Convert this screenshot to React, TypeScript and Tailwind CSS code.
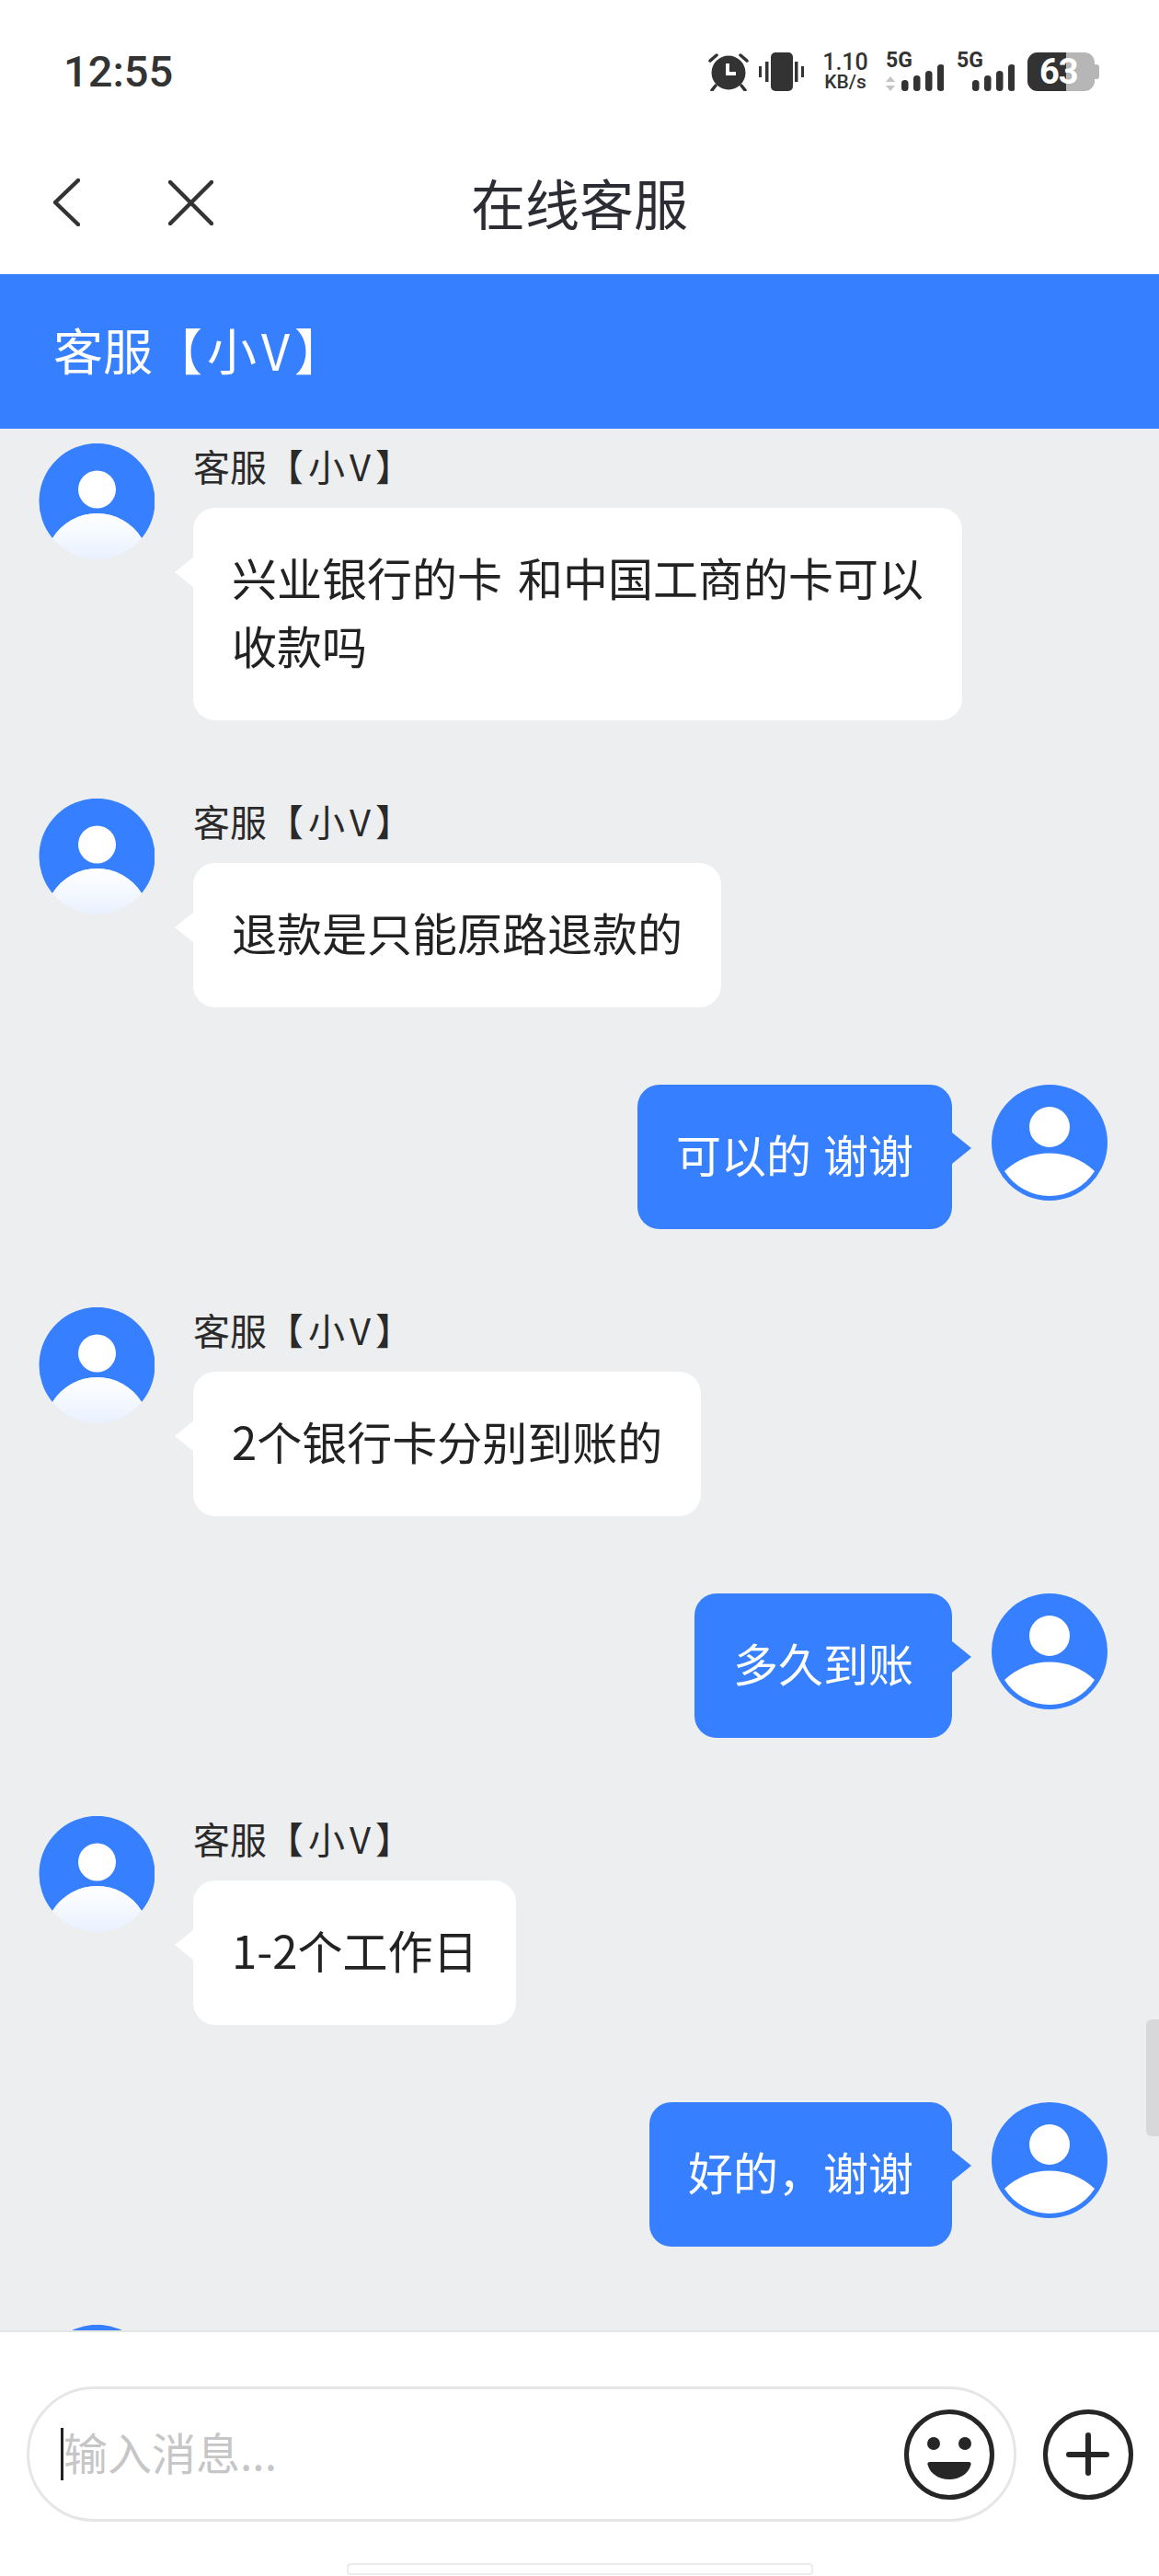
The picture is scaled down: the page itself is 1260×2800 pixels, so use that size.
const cjk = "font-['Noto_Sans_CJK_SC','Noto_Sans',sans-serif]";

function AlarmIcon() {
  return (
    <svg width="44" height="42" viewBox="0 0 44 42" fill="none">
      <circle cx="22" cy="22" r="18.5" fill="#333" />
      <path d="M21 12v11h9" stroke="#fff" strokeWidth="4" />
      <path d="M2 9l7-6M42 9l-7-6M8 36l-4 5M36 36l4 5" stroke="#333" strokeWidth="3.5" strokeLinecap="round" />
    </svg>
  );
}

function VibrateIcon() {
  return (
    <svg width="49" height="42" viewBox="0 0 49 42" fill="#333">
      <rect x="13" y="0" width="24" height="42" rx="5" />
      <rect x="0" y="15" width="3" height="12" />
      <rect x="7" y="10" width="3.5" height="22" />
      <rect x="39" y="10" width="3.5" height="22" />
      <rect x="46" y="15" width="3" height="12" />
    </svg>
  );
}

function Signal({ arrows }: { arrows?: boolean }) {
  return (
    <div className="relative w-[63px] h-[42px]">
      <svg className="absolute inset-0" width="63" height="42" viewBox="0 0 63 42" fill="#333">
        {arrows && <path d="M5 26l5 6H0zM5 42l5-6H0z" fill="#c4c4c4" />}
        <rect x="17" y="30" width="7.5" height="12" rx="3.5" />
        <rect x="30" y="25" width="7.5" height="17" rx="3.5" />
        <rect x="43" y="20" width="7.5" height="22" rx="3.5" />
        <rect x="56" y="13" width="7.5" height="29" rx="3.5" />
      </svg>
      <span className="absolute left-0 top-[-3px] font-['Roboto',sans-serif] font-bold text-[23px] leading-[24px] text-[#333]">5G</span>
    </div>
  );
}

function StatusBar() {
  return (
    <div className="h-[150px] bg-white flex justify-between items-start pt-[57px] pl-[69px] pr-[65px]">
      <span className="font-['Roboto',sans-serif] font-medium text-[47px] leading-[42px] text-[#333]">12:55</span>
      <div className="flex items-start">
        <AlarmIcon />
        <div className="ml-[11px]">
          <VibrateIcon />
        </div>
        <div className="ml-[20px] w-[50px] flex flex-col items-center font-['Roboto',sans-serif] font-medium text-[#333]">
          <span className="text-[25px] leading-[22px]">1.10</span>
          <span className="text-[21px] leading-[21px]">KB/s</span>
        </div>
        <div className="ml-[19px]">
          <Signal arrows />
        </div>
        <div className="ml-[14px]">
          <Signal />
        </div>
        <div className="ml-[14px] relative flex items-center">
          <div className="w-[73px] h-[42px] rounded-[11px] overflow-hidden flex bg-[#b6b6b6]">
            <div className="w-[42px] bg-[#333]" />
          </div>
          <div className="w-[5px] h-[16px] rounded-r-[3px] bg-[#b6b6b6]" />
          <span className="absolute left-[13px] top-0 font-['Roboto',sans-serif] font-bold text-[38px] leading-[42px] tracking-[-1px] text-white">63</span>
        </div>
      </div>
    </div>
  );
}

function NavBar() {
  return (
    <div className={`h-[148px] bg-white grid grid-cols-[1fr_auto_1fr] items-center pb-[8px] ${cjk}`}>
      <div className="flex items-center pl-[58px] gap-[96px]">
        <svg width="29" height="52" viewBox="0 0 29 52" fill="none" stroke="#333" strokeWidth="4.5" strokeLinecap="round" strokeLinejoin="round">
          <path d="M27 2L2 26l25 24" />
        </svg>
        <svg width="49" height="49" viewBox="0 0 49 49" fill="none" stroke="#333" strokeWidth="4.5" strokeLinecap="round">
          <path d="M2 2l45 45M47 2L2 47" />
        </svg>
      </div>
      <span className="text-[59px] leading-[70px] text-[#2c2c34]">在线客服</span>
      <div />
    </div>
  );
}

function AgentAvatar() {
  return (
    <svg className="shrink-0" width="126" height="126" viewBox="0 0 126 126">
      <defs>
        <linearGradient id="agentBody" x1="0" y1="0" x2="0" y2="1">
          <stop offset="0" stopColor="#ffffff" />
          <stop offset="1" stopColor="#e9f1ff" />
        </linearGradient>
      </defs>
      <path d="M15 103A63 63 0 1 1 112 103A57 57 0 0 0 15 103Z" fill="#367ffe" />
      <circle cx="63.5" cy="50" r="20.5" fill="#fff" />
      <path d="M15 103A57 57 0 0 1 112 103A63 63 0 0 1 15 103Z" fill="url(#agentBody)" />
    </svg>
  );
}

function UserAvatar() {
  return (
    <svg className="shrink-0" width="126" height="126" viewBox="0 0 126 126">
      <circle cx="63" cy="63" r="63" fill="#367ffe" />
      <circle cx="63" cy="46" r="22" fill="#fff" />
      <path d="M14 94A71 71 0 0 1 112 94A58 58 0 0 1 14 94Z" fill="#fff" />
    </svg>
  );
}

function AgentName({ size }: { size: string }) {
  return (
    <span className={size}>
      客服<span className="tracking-[5px]">【小V</span>】
    </span>
  );
}

function AgentMessage({ lines }: { lines: string[] }) {
  return (
    <div className="flex gap-[42px] pl-[42px]">
      <AgentAvatar />
      <div className="flex flex-col items-start">
        <div className="h-[70px] text-[#2a2a2a]">
          <AgentName size="text-[40px] leading-[48px]" />
        </div>
        <div className="relative bg-white rounded-[24px] px-[42px] pt-[38px] pb-[45px] text-[49px] leading-[74px] text-[#222] whitespace-pre [word-spacing:6px]">
          <div className="absolute left-[-20px] top-[53px] w-0 h-0 border-y-[17px] border-y-transparent border-r-[21px] border-r-white" />
          {lines.map(l => (
            <div key={l}>{l}</div>
          ))}
        </div>
      </div>
    </div>
  );
}

function UserMessage({ text }: { text: string }) {
  return (
    <div className="flex justify-end gap-[43px] pr-[56px]">
      <div className="relative bg-[#367ffe] rounded-[24px] px-[42px] pt-[38px] pb-[45px] text-[49px] leading-[74px] text-white whitespace-pre [word-spacing:2px]">
        {text}
        <div className="absolute right-[-21px] top-[52px] w-0 h-0 border-y-[17px] border-y-transparent border-l-[21px] border-l-[#367ffe]" />
      </div>
      <UserAvatar />
    </div>
  );
}

function Composer() {
  return (
    <div className={`flex-1 bg-white border-t-2 border-[#e6e6e6] relative ${cjk}`}>
      <div className="flex items-center pt-[59px] pl-[29px]">
        <div className="w-[1076px] h-[147px] rounded-[74px] border-[3px] border-[#e6e6e6] flex items-center justify-between pl-[34px] pr-[21px]">
          <div className="flex items-center">
            <div className="w-[3px] h-[57px] bg-[#222]" />
            <span className="text-[48px] leading-[57px] -mt-[6px] text-[#c6c6c6]">输入消息...</span>
          </div>
          <svg width="98" height="98" viewBox="0 0 98 98" fill="none">
            <circle cx="49" cy="49" r="46.5" stroke="#262626" strokeWidth="5" />
            <circle cx="32" cy="37" r="7" fill="#262626" />
            <circle cx="66" cy="37" r="7" fill="#262626" />
            <path d="M28 57h42c2 0 3 1 2.500 3C70 70 60 76 49 76S28 70 25.500 60C25 58 26 57 28 57Z" fill="#262626" />
          </svg>
        </div>
        <svg className="ml-[29px]" width="98" height="98" viewBox="0 0 98 98" fill="none" stroke="#262626" strokeLinecap="round">
          <circle cx="49" cy="49" r="46.5" strokeWidth="5" />
          <path d="M49 28v41M28 49h41" strokeWidth="6" />
        </svg>
      </div>
      <div className="absolute left-[377px] top-[251px] w-[507px] h-[13px] rounded-[4px] border-2 border-[#ececec] bg-white" />
    </div>
  );
}

export default function App() {
  return (
    <div className="w-[1260px] h-[2800px] flex flex-col bg-white overflow-hidden">
      <StatusBar />
      <NavBar />
      <div className={`h-[168px] bg-[#367ffe] flex items-center pl-[58px] pb-[6px] text-white ${cjk}`}>
        <AgentName size="text-[54px]" />
      </div>
      <div className={`relative h-[2067px] shrink-0 overflow-hidden bg-[#edeef0] pt-[16px] flex flex-col gap-[84.5px] ${cjk}`}>
        <AgentMessage lines={["兴业银行的卡 和中国工商的卡可以", "收款吗"]} />
        <AgentMessage lines={["退款是只能原路退款的"]} />
        <UserMessage text="可以的 谢谢" />
        <AgentMessage lines={["2个银行卡分别到账的"]} />
        <UserMessage text="多久到账" />
        <AgentMessage lines={["1-2个工作日"]} />
        <UserMessage text="好的，谢谢" />
        <div className="pl-[42px]">
          <AgentAvatar />
        </div>
        <div className="absolute right-0 top-[1729px] w-[14px] h-[127px] rounded-l-[6px] bg-[#d8d8da]" />
      </div>
      <Composer />
    </div>
  );
}
